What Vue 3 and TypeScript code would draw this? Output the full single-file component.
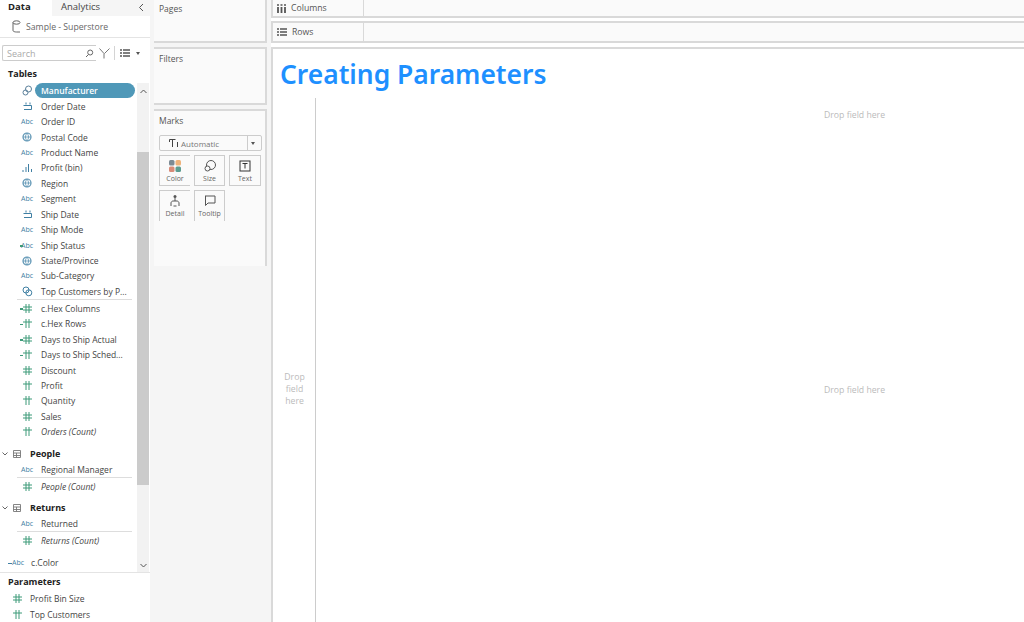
<script setup lang="ts">
type Kind = 'abc' | 'calabc' | 'date' | 'datecalc' | 'globe' | 'link' | 'bin' | 'set' | 'hash' | 'hashcalc' | 'hash2' | 'hash2calc'
interface Field { name: string; kind: Kind; italic?: boolean; active?: boolean; sep?: boolean }

const main: Field[] = [
  { name: 'Manufacturer', kind: 'link', active: true },
  { name: 'Order Date', kind: 'date' },
  { name: 'Order ID', kind: 'abc' },
  { name: 'Postal Code', kind: 'globe' },
  { name: 'Product Name', kind: 'abc' },
  { name: 'Profit (bin)', kind: 'bin' },
  { name: 'Region', kind: 'globe' },
  { name: 'Segment', kind: 'abc' },
  { name: 'Ship Date', kind: 'date' },
  { name: 'Ship Mode', kind: 'abc' },
  { name: 'Ship Status', kind: 'calabc' },
  { name: 'State/Province', kind: 'globe' },
  { name: 'Sub-Category', kind: 'abc' },
  { name: 'Top Customers by P...', kind: 'set', sep: true },
  { name: 'c.Hex Columns', kind: 'hashcalc' },
  { name: 'c.Hex Rows', kind: 'hash2calc' },
  { name: 'Days to Ship Actual', kind: 'hashcalc' },
  { name: 'Days to Ship Sched...', kind: 'hash2calc' },
  { name: 'Discount', kind: 'hash' },
  { name: 'Profit', kind: 'hash2' },
  { name: 'Quantity', kind: 'hash2' },
  { name: 'Sales', kind: 'hash' },
  { name: 'Orders (Count)', kind: 'hash2', italic: true }
]
const people: Field[] = [
  { name: 'Regional Manager', kind: 'abc', sep: true },
  { name: 'People (Count)', kind: 'hash', italic: true }
]
const returns: Field[] = [
  { name: 'Returned', kind: 'abc', sep: true },
  { name: 'Returns (Count)', kind: 'hash', italic: true }
]
const groups = [
  { title: 'People', fields: people },
  { title: 'Returns', fields: returns }
]
const params: Field[] = [
  { name: 'Profit Bin Size', kind: 'hash' },
  { name: 'Top Customers', kind: 'hash2' }
]
const isHash = (k: Kind) => k.startsWith('hash')
const isAbc = (k: Kind) => k === 'abc' || k === 'calabc'
const isCalc = (k: Kind) => k === 'calabc' || k === 'datecalc' || k.endsWith('calc')
const markCards = [
  { label: 'Color', open: true, bottom: true },
  { label: 'Size', open: false, bottom: true },
  { label: 'Text', open: false, bottom: true },
  { label: 'Detail', open: true, bottom: false },
  { label: 'Tooltip', open: false, bottom: false }
]
</script>

<template>
  <div class="app">
    <aside class="data-pane">
      <div class="tabs">
        <div class="tab active">Data</div>
        <div class="tab other">Analytics
          <svg class="collapse" width="6" height="9" viewBox="0 0 6 9"><path d="M5 1 1.500 4.500 5 8" fill="none" stroke="#555" stroke-width="1"/></svg>
        </div>
      </div>
      <div class="source">
        <svg width="9" height="13" viewBox="0 0 9 13"><ellipse cx="4.500" cy="2.500" rx="3.500" ry="1.700" fill="none" stroke="#666"/><path d="M1 2.500V10.500C1 11.500 3 12 4.500 12H8" fill="none" stroke="#666"/></svg>
        <span>Sample - Superstore</span>
      </div>
      <div class="search-row">
        <div class="search">
          <span>Search</span>
          <svg width="9" height="9" viewBox="0 0 9 9"><circle cx="5.200" cy="3.500" r="2.500" fill="none" stroke="#666"/><path d="M3.500 5.500 1 8" stroke="#666"/></svg>
        </div>
        <svg class="funnel" width="11" height="11" viewBox="0 0 11 11"><path d="M.5.500 5 5.500V10.500M10.500.500 5.500 5.500" fill="none" stroke="#777"/></svg>
        <i class="vbar"></i>
        <svg width="10" height="8" viewBox="0 0 10 8"><path d="M0 1h2M3 1h7M0 4h2M3 4h7M0 7h2M3 7h7" stroke="#555" stroke-width="1.300"/></svg>
        <i class="caret"></i>
      </div>
      <div class="heading tables">Tables</div>
      <div class="tree">
        <div class="tree-list">
          <template v-for="f in main" :key="f.name">
            <div class="field" :class="{ sep: f.sep }">
              <span class="ic" :class="{ calc: isCalc(f.kind) }">
                <span v-if="isAbc(f.kind)" class="abc">Abc</span>
                <svg v-else-if="f.kind === 'date'" width="11" height="9" viewBox="0 0 11 9"><path d="M1.500 3.500h8M2 7.500h7.500M4 .5v2M8 .5v2M9.500 3.500v4" fill="none" stroke="#3f7fa3"/></svg>
                <svg v-else-if="f.kind === 'globe'" width="10" height="10" viewBox="0 0 10 10"><circle cx="5" cy="5" r="4" fill="none" stroke="#5b93b3" stroke-width="1.200"/><path d="M1 5h8M5 1c-2 2.500-2 5.500 0 8M5 1c2 2.500 2 5.500 0 8" fill="none" stroke="#5b93b3" stroke-width=".8"/></svg>
                <svg v-else-if="f.kind === 'link'" width="11" height="11" viewBox="0 0 11 11"><circle cx="6.500" cy="4" r="3" fill="none" stroke="#5a7f9a"/><circle cx="3.500" cy="7.500" r="2.500" fill="none" stroke="#5a7f9a"/></svg>
                <svg v-else-if="f.kind === 'set'" width="11" height="11" viewBox="0 0 11 11"><circle cx="4" cy="4" r="3" fill="none" stroke="#3f7fa3"/><circle cx="6.800" cy="6.800" r="3" fill="none" stroke="#3f7fa3"/></svg>
                <svg v-else-if="f.kind === 'bin'" width="11" height="8" viewBox="0 0 11 8"><path d="M1 6v2M4 3v5M6.500 0v8M9.500 5v3" stroke="#3f7fa3"/></svg>
                <svg v-else-if="isHash(f.kind)" width="9" height="9" viewBox="0 0 9 9"><path v-if="f.kind.startsWith('hash2')" d="M3 0v9M6 0v9M0 3h9" stroke="#3d9a78" fill="none"/><path v-else d="M3 0v9M6 0v9M0 3h9M0 6h9" stroke="#3d9a78" fill="none"/></svg>
              </span>
              <span class="label" :class="{ it: f.italic, pill: f.active }">{{ f.name }}</span>
            </div>
          </template>
          <div v-for="g in groups" :key="g.title" class="group">
            <div class="group-head">
              <svg width="6" height="4" viewBox="0 0 6 4"><path d="M.5.500 3 3 5.500.5" fill="none" stroke="#666"/></svg>
              <svg width="8" height="8" viewBox="0 0 8 8"><path d="M.5.500h7v7h-7zM.5 3h7M.5 5.500h7M3.500 3v4.500" fill="none" stroke="#777" stroke-width=".9"/></svg>
              <span>{{ g.title }}</span>
            </div>
            <div v-for="f in g.fields" :key="f.name" class="field" :class="{ sep: f.sep }">
              <span class="ic">
                <span v-if="isAbc(f.kind)" class="abc">Abc</span>
                <svg v-else width="9" height="9" viewBox="0 0 9 9"><path d="M3 0v9M6 0v9M0 3h9M0 6h9" stroke="#3d9a78" fill="none"/></svg>
              </span>
              <span class="label" :class="{ it: f.italic }">{{ f.name }}</span>
            </div>
          </div>
          <div class="loose">
            <span class="abc"><i class="dash"></i>Abc</span>
            <span class="label">c.Color</span>
          </div>
        </div>
        <div class="scroll">
          <svg class="arrow" width="7" height="5" viewBox="0 0 7 5"><path d="M.5 4 3.500 1 6.500 4" fill="none" stroke="#555"/></svg>
          <div class="thumb"></div>
          <svg class="arrow low" width="7" height="5" viewBox="0 0 7 5"><path d="M.5 1 3.500 4 6.500 1" fill="none" stroke="#555"/></svg>
        </div>
      </div>
      <div class="params">
        <div class="heading">Parameters</div>
        <div v-for="p in params" :key="p.name" class="param">
          <svg width="9" height="9" viewBox="0 0 9 9"><path v-if="p.kind === 'hash2'" d="M3 0v9M6 0v9M0 3h9" stroke="#3d9a78" fill="none"/><path v-else d="M3 0v9M6 0v9M0 3h9M0 6h9" stroke="#3d9a78" fill="none"/></svg>
          <span class="label">{{ p.name }}</span>
        </div>
      </div>
    </aside>

    <section class="cards">
      <div class="card pages"><span class="card-title">Pages</span></div>
      <div class="card filters"><span class="card-title">Filters</span></div>
      <div class="card marks">
        <span class="card-title">Marks</span>
        <div class="select">
          <svg width="9" height="9" viewBox="0 0 9 9"><path d="M.5 3V.5H6.500M3.500.5V8M8.500 3V8" fill="none" stroke="#444"/></svg>
          <span>Automatic</span>
          <b class="select-arrow"><i class="caret"></i></b>
        </div>
        <div class="mark-grid">
          <div v-for="m in markCards" :key="m.label" class="mark" :class="{ open: m.open, bottom: m.bottom }">
            <svg v-if="m.label === 'Color'" width="12" height="12" viewBox="0 0 12 12"><rect x="0" y="0" width="5.500" height="5.500" rx="1.500" fill="#7c8a94"/><rect x="6.500" y="0" width="5.500" height="5.500" rx="1.500" fill="#eeb27a"/><rect x="0" y="6.500" width="5.500" height="5.500" rx="1.500" fill="#d98b78"/><rect x="6.500" y="6.500" width="5.500" height="5.500" rx="1.500" fill="#5c9c90"/></svg>
            <svg v-else-if="m.label === 'Size'" width="12" height="12" viewBox="0 0 12 12"><circle cx="7" cy="5" r="4.500" fill="none" stroke="#555"/><circle cx="3.500" cy="8.500" r="2.500" fill="#fafafa" stroke="#555"/></svg>
            <svg v-else-if="m.label === 'Text'" width="12" height="12" viewBox="0 0 12 12"><rect x="1" y="1" width="10" height="10" fill="none" stroke="#333"/><path d="M3.500 3.500h5M6 3.500v5" fill="none" stroke="#333"/></svg>
            <svg v-else-if="m.label === 'Detail'" width="12" height="12" viewBox="0 0 12 12"><circle cx="6" cy="1.500" r="1.500" fill="#555"/><path d="M6 3v3M2 11V8c0-1 1-2 2-2h4c1 0 2 1 2 2v3M4.500 11h3" fill="none" stroke="#555"/></svg>
            <svg v-else width="12" height="12" viewBox="0 0 12 12"><path d="M1 1h10v7H4L1.500 10.500V1" fill="none" stroke="#555"/></svg>
            <span>{{ m.label }}</span>
          </div>
        </div>
      </div>
    </section>

    <main class="view">
      <div class="shelf">
        <div class="shelf-label">
          <svg width="9" height="9" viewBox="0 0 9 9"><path d="M1 3v6M4.500 3v6M8 3v6" stroke="#555" stroke-width="1.800"/><path d="M0 1h9" stroke="#555" stroke-dasharray="2 1.500" stroke-width="1.500"/></svg>
          <span>Columns</span>
        </div>
      </div>
      <div class="shelf rows">
        <div class="shelf-label">
          <svg width="10" height="8" viewBox="0 0 10 8"><path d="M0 1h2M3 1h7M0 4h2M3 4h7M0 7h2M3 7h7" stroke="#555" stroke-width="1.300"/></svg>
          <span>Rows</span>
        </div>
      </div>
      <div class="sheet">
        <h1>Creating Parameters</h1>
        <div class="viz">
          <div class="corner"></div>
          <div class="top-drop">Drop field here</div>
          <div class="left-drop">Drop<br>field<br>here</div>
          <div class="center-drop">Drop field here</div>
        </div>
      </div>
    </main>
  </div>
</template>

<style>
html, body { margin: 0; background: #fff; overflow: hidden; }
</style>

<style scoped>
.app { width: 1024px; height: 622px; display: flex; overflow: hidden; font-family: "Open Sans", "Liberation Sans", sans-serif; font-size: 8.5px; color: #444; background: #fff; }
.data-pane { width: 150px; flex: none; display: flex; flex-direction: column; background: #fff; }
.tabs { display: flex; height: 16px; flex: none; font-size: 9.500px; }
.tab { line-height: 14px; }
.tab.active { width: 52px; padding-left: 8px; box-sizing: border-box; font-weight: 700; color: #222; }
.tab.other { flex: 1; background: #f5f5f5; padding-left: 9px; color: #444; position: relative; }
.collapse { position: absolute; right: 6px; top: 3px; }
.source { height: 21px; flex: none; display: flex; align-items: center; gap: 5px; padding-left: 12px; border-bottom: 1px solid #e4e4e4; box-sizing: content-box; color: #666; font-size: 8.700px; }
.search-row { display: flex; align-items: center; height: 16px; margin-top: 7px; padding-left: 2px; flex: none; }
.search { width: 94px; height: 16px; box-sizing: border-box; border: 1px solid #ccc; border-right: none; display: flex; align-items: center; justify-content: space-between; padding: 0 2px 0 4px; color: #aaa; font-size: 9px; border-radius: 2px 0 0 2px; }
.funnel { margin-left: 3px; }
.vbar { width: 1px; height: 14px; background: #d4d4d4; margin: 0 5px 0 4px; }
.caret { display: inline-block; width: 0; height: 0; border: 2.500px solid transparent; border-top: 3px solid #555; border-bottom: none; margin-left: 6px; }
.heading { font-weight: 700; color: #222; font-size: 9px; padding-left: 8px; }
.tables { height: 15px; line-height: 15px; margin-top: 5px; flex: none; }
.tree { display: flex; flex: 1; min-height: 0; margin-top: 2px; }
.tree-list { flex: 1; min-width: 0; }
.field { height: 15.440px; display: flex; align-items: center; margin-left: 17px; position: relative; }
.field.sep { margin-bottom: 1.500px; }
.field.sep::after { content: ""; position: absolute; left: 0; right: 5px; bottom: -1px; height: 1px; background: #ddd; }
.ic { width: 24px; flex: none; display: flex; justify-content: center; align-items: center; padding-right: 4px; box-sizing: border-box; position: relative; }
.ic.calc::before { content: ""; position: absolute; left: 3px; top: 50%; width: 3px; height: 1.500px; background: #3d9a78; }
.abc { font-size: 7px; color: #3f7fa3; letter-spacing: 0; }
.label { white-space: nowrap; }
.it { font-style: italic; }
.pill { background: #4f98b8; color: #fff; border-radius: 8px; height: 15px; line-height: 15px; width: 100px; box-sizing: border-box; padding-left: 6px; margin-left: -6px; font-weight: 600; }
.group { margin-top: 6px; }
.group + .group { margin-top: 6px; }
.group-head { height: 16px; display: flex; align-items: center; padding-left: 2px; font-weight: 700; color: #222; font-size: 9px; }
.group-head svg:first-child { margin-right: 5px; }
.group-head svg:nth-child(2) { margin-right: 9px; }
.loose { display: flex; align-items: center; height: 15px; margin-top: 7px; padding-left: 8px; gap: 7px; }
.dash { display: inline-block; width: 4px; height: 1.500px; background: #3f7fa3; vertical-align: middle; }
.scroll { width: 12px; margin-right: 1px; flex: none; background: #f2f2f2; display: flex; flex-direction: column; align-items: center; position: relative; }
.arrow { position: absolute; top: 6px; }
.arrow.low { top: auto; bottom: 4px; }
.thumb { position: absolute; left: 0; right: 0; top: 69px; height: 333px; background: #cbcbcb; }
.params { border-top: 1px solid #e4e4e4; height: 50px; flex: none; box-sizing: border-box; padding-top: 1px; }
.params .heading { height: 15px; line-height: 15px; margin-bottom: 1px; }
.param { height: 16px; display: flex; align-items: center; gap: 8px; padding-left: 13px; }

.cards { width: 121px; flex: none; background: #f5f5f5; display: flex; flex-direction: column; gap: 4px; padding-left: 4px; box-sizing: border-box; }
.card { width: 113px; box-sizing: border-box; background: #fafafa; border-right: 2px solid #d9d9d9; border-bottom: 2px solid #d9d9d9; padding-left: 5px; }
.card-title { color: #555; display: block; font-size: 8.5px; }
.pages { height: 43px; padding-top: 3px; }
.filters { height: 58px; border-top: 2px solid #d9d9d9; padding-top: 4px; }
.marks { height: 157px; border-top: 2px solid #d9d9d9; border-bottom: none; padding-top: 4px; }
.select { margin-top: 9px; width: 103px; height: 16px; box-sizing: border-box; border: 1px solid #ccc; border-radius: 2px; display: flex; align-items: center; padding-left: 9px; gap: 3px; color: #777; font-size: 8px; }
.select-arrow { margin-left: auto; width: 13px; height: 100%; border-left: 1px solid #ccc; display: flex; align-items: center; }
.select-arrow .caret { margin-left: 3px; }
.mark-grid { display: grid; grid-template-columns: 31px 31px 32px; column-gap: 4px; row-gap: 4px; margin-top: 4px; }
.mark { height: 31px; box-sizing: border-box; border: solid #ccc; border-width: 1px 1px 0; display: flex; flex-direction: column; align-items: center; padding-top: 4px; gap: 2px; font-size: 7px; color: #666; }
.mark.open { border-right: none; }
.mark.bottom { border-bottom-width: 1px; }

.view { flex: 1; min-width: 0; display: flex; flex-direction: column; }
.shelf { height: 18px; border-bottom: 2px solid #d9d9d9; border-left: 2px solid #d9d9d9; box-sizing: border-box; background: #fafafa; flex: none; }
.shelf.rows { height: 22px; margin-top: 3px; border-top: 2px solid #d9d9d9; }
.shelf-label { width: 91px; height: 100%; box-sizing: border-box; border-right: 1px solid #d9d9d9; display: flex; align-items: center; gap: 5px; padding-left: 4px; color: #555; font-size: 8.700px; line-height: 13px; }
.sheet { flex: 1; min-height: 0; margin-top: 4px; border-top: 2px solid #d9d9d9; border-left: 2px solid #d9d9d9; background: #fff; display: flex; flex-direction: column; }
h1 { margin: 0; height: 49px; box-sizing: border-box; padding: 7px 0 0 7px; font-family: "Noto Sans", "Open Sans", sans-serif; font-size: 26.400px; line-height: 36px; font-weight: 600; color: #1e90ff; white-space: nowrap; }
.viz { flex: 1; min-height: 0; display: grid; grid-template-columns: 43px 1fr; grid-template-rows: 58px 1fr; color: #bbb; font-size: 8.700px; }
.corner, .left-drop { border-right: 1px solid #ccc; }
.top-drop { padding: 11px 0 0 508px; }
.left-drop { display: flex; align-items: center; justify-content: center; text-align: center; line-height: 12px; padding-left: 1px; }
.center-drop { display: flex; align-items: center; padding: 2px 0 0 508px; }
</style>
